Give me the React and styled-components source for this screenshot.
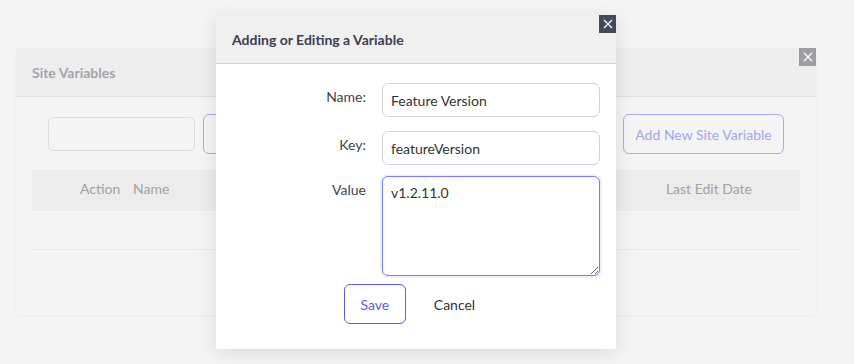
import React from 'react';
import styled, { createGlobalStyle } from 'styled-components';

const GlobalStyle = createGlobalStyle`
  body {
    margin: 0;
    background: #f4f4f4;
    font-family: Lato, "Liberation Sans", sans-serif;
    font-size: 14px;
  }
`;

export default function App() {
  return (
    <>
      <GlobalStyle />
      <Page>
        <Card>
          <CardHeader>
            <CardTitle>Site Variables</CardTitle>
            <CloseBox $dark={false}>
              <CloseIcon />
            </CloseBox>
          </CardHeader>
          <CardBody>
            <Toolbar>
              <SearchInput />
              {/* label of this button sits under the modal */}
              <FilterButton aria-label="Search" />
              <Spacer />
              <OutlineButton>Add New Site Variable</OutlineButton>
            </Toolbar>
            <Table>
              <HeadRow>
                <HeadCell $w={41}>Action</HeadCell>
                <HeadCell $w={120}>Name</HeadCell>
                <Spacer />
                <HeadCell $w={100} $align="right">Last Edit Date</HeadCell>
              </HeadRow>
              <EmptyRow />
            </Table>
          </CardBody>
        </Card>

        <Modal>
          <ModalHeader>
            <ModalTitle>Adding or Editing a Variable</ModalTitle>
            <CloseBox $dark>
              <CloseIcon />
            </CloseBox>
          </ModalHeader>
          <ModalBody>
            <FieldRow>
              <Label>Name:</Label>
              <TextInput defaultValue="Feature Version" />
            </FieldRow>
            <FieldRow>
              <Label>Key:</Label>
              <TextInput defaultValue="featureVersion" />
            </FieldRow>
            <FieldRow $tall>
              <Label>Value</Label>
              <TextArea defaultValue="v1.2.11.0" />
            </FieldRow>
            <Actions>
              <SaveButton>Save</SaveButton>
              <CancelButton>Cancel</CancelButton>
            </Actions>
          </ModalBody>
        </Modal>
      </Page>
    </>
  );
}

function CloseIcon() {
  return (
    <svg width="10" height="10" viewBox="0 0 10 10">
      <path d="M1 1L9 9M9 1L1 9" stroke="#fff" strokeWidth="1.3" />
    </svg>
  );
}

const Page = styled.div`
  position: relative;
  width: 854px;
  height: 364px;
  padding: 48px 0 0 16px;
  box-sizing: border-box;
`;

const Card = styled.div`
  width: 800px;
  background: #f4f4f4;
  box-shadow: 0 1px 3px rgba(0, 0, 0, 0.04);
`;

const CardHeader = styled.div`
  position: relative;
  height: 48px;
  display: flex;
  align-items: center;
  padding: 0 16px;
  background: #eeeeee;
  border-bottom: 1px solid #dedede;
`;

const CardTitle = styled.div`
  font-weight: 700;
  color: #a3a4ad;
  margin-top: 1px;
`;

const CloseBox = styled.div`
  position: absolute;
  top: 0;
  right: 0;
  width: 17px;
  height: 18px;
  display: flex;
  align-items: center;
  justify-content: center;
  background: ${(p) => (p.$dark ? '#464958' : '#9d9ea3')};
`;

const CardBody = styled.div`
  padding: 17px 16px 65px;
`;

const Toolbar = styled.div`
  display: flex;
  align-items: center;
  gap: 8px;
  padding: 0 16px;
  height: 40px;
`;

const SearchInput = styled.input`
  width: 147px;
  height: 34px;
  box-sizing: border-box;
  border: 1px solid #dcdcdc;
  border-radius: 5px;
  background: #f4f4f4;
`;

const FilterButton = styled.button`
  width: 80px;
  height: 40px;
  border: 1px solid #a8abf2;
  border-radius: 6px;
  background: transparent;
`;

const Spacer = styled.div`
  flex: 1;
`;

const OutlineButton = styled.button`
  height: 40px;
  width: 161px;
  padding: 0;
  border: 1px solid #a8abf2;
  border-radius: 6px;
  background: transparent;
  color: #a2a5ec;
  font: inherit;
`;

const Table = styled.div`
  margin-top: 16px;
`;

const HeadRow = styled.div`
  height: 41px;
  display: flex;
  align-items: center;
  gap: 12px;
  padding: 0 48px 0 48px;
  background: #ececec;
`;

const HeadCell = styled.div`
  width: ${(p) => p.$w}px;
  text-align: ${(p) => p.$align || 'left'};
  white-space: nowrap;
  color: #a2a2a2;
  margin-top: -4px;
`;

const EmptyRow = styled.div`
  height: 38px;
  border-bottom: 1px solid #e8e8e8;
`;

const Modal = styled.div`
  position: absolute;
  left: 216px;
  top: 15px;
  width: 400px;
  height: 334px;
  background: #fff;
  box-shadow: 0 4px 18px rgba(0, 0, 0, 0.1);
`;

const ModalHeader = styled.div`
  position: relative;
  height: 48px;
  display: flex;
  align-items: center;
  padding: 0 16px;
  background: #f0f0f0;
  border-bottom: 1px solid #cfd0dc;
`;

const ModalTitle = styled.div`
  font-weight: 700;
  color: #3b3e4f;
`;

const ModalBody = styled.div`
  padding: 19px 16px 0 0;
  display: flex;
  flex-direction: column;
`;

const FieldRow = styled.div`
  display: flex;
  gap: 16px;
  margin-top: ${(p) => (p.$tall ? '-3px' : '0')};
  margin-bottom: ${(p) => (p.$tall ? '8px' : '14px')};
`;

const Label = styled.div`
  width: 150px;
  text-align: right;
  color: #444;
  line-height: 20px;
  padding-top: 4px;
`;

const TextInput = styled.input`
  flex: 1;
  height: 34px;
  box-sizing: border-box;
  padding: 0 8px;
  border: 1px solid #d2d3dc;
  border-radius: 6px;
  font: inherit;
  color: #333;
  outline: none;
`;

const TextArea = styled.textarea`
  flex: 1;
  height: 100px;
  box-sizing: border-box;
  padding: 7px 8px;
  border: 1px solid #7b7ff2;
  border-radius: 6px;
  box-shadow: 0 0 0 2px rgba(123, 127, 242, 0.12);
  font: inherit;
  color: #333;
  outline: none;
`;

const Actions = styled.div`
  display: flex;
  justify-content: center;
  gap: 11px;
  padding-left: 20px;
`;

const SaveButton = styled.button`
  width: 62px;
  height: 40px;
  border: 1px solid #5a5fe6;
  border-radius: 6px;
  background: #fff;
  color: #5a5fe6;
  font: inherit;
`;

const CancelButton = styled.button`
  height: 40px;
  padding: 0 16px;
  border: 1px solid transparent;
  background: transparent;
  color: #333;
  font: inherit;
`;
